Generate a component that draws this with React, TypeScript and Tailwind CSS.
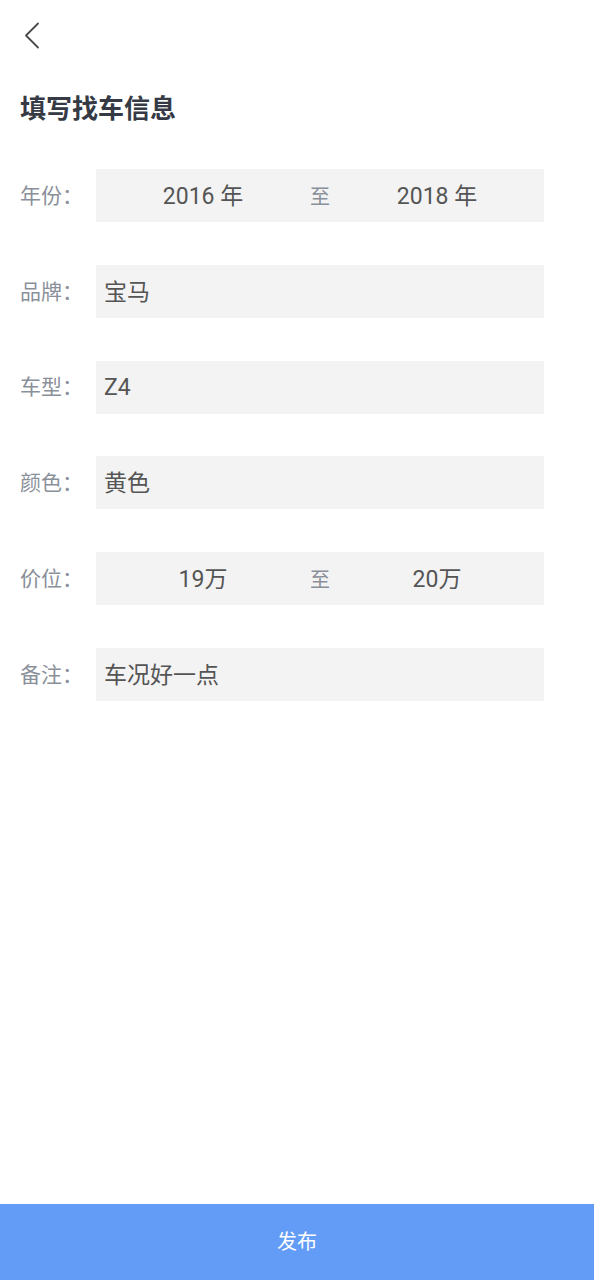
import React from "react";

const font = { fontFamily: 'Roboto, "Noto Sans CJK SC", "Noto Sans", sans-serif' };

function Row({ label, children }: { label: string; children: React.ReactNode }) {
  return (
    <div className="flex items-center h-[53px] pr-[50px]">
      <div className="w-[96px] pl-[20px] pt-[2px] text-[21px] text-[#8a9099]">{label}：</div>
      <div className="flex-1 h-full bg-[#f3f3f3] flex items-center pt-[3px] text-[23px] text-[#555555]">{children}</div>
    </div>
  );
}

function Range({ a, b }: { a: string; b: string }) {
  return (
    <>
      <div className="flex-1 text-center">{a}</div>
      <div className="w-[20px] flex justify-center text-[20px] text-[#8a9099]">至</div>
      <div className="flex-1 text-center">{b}</div>
    </>
  );
}

export default function App() {
  return (
    <div className="relative w-[594px] h-[1280px] bg-white" style={font}>
      <div className="h-[70px] pl-[24px] pt-[22px]">
        <svg width="16" height="28" viewBox="0 0 16 28" fill="none">
          <path d="M14 1.5 L2 13.5 L14 25.5" stroke="#4a4a4a" strokeWidth="1.8" strokeLinecap="round" strokeLinejoin="round" />
        </svg>
      </div>
      <div className="pl-[20px] h-[76px] pt-[21px] text-[26px] font-bold text-[#353a45] leading-[36px]">填写找车信息</div>
      <div className="flex flex-col gap-[42.8px] pt-[23px]">
        <Row label="年份"><Range a="2016 年" b="2018 年" /></Row>
        <Row label="品牌"><span className="pl-[8px]">宝马</span></Row>
        <Row label="车型"><span className="pl-[8px]">Z4</span></Row>
        <Row label="颜色"><span className="pl-[8px]">黄色</span></Row>
        <Row label="价位"><Range a="19万" b="20万" /></Row>
        <Row label="备注"><span className="pl-[8px]">车况好一点</span></Row>
      </div>
      <div className="absolute left-0 right-0 bottom-0 h-[76px] bg-[#639cf6] flex items-center justify-center text-white text-[20px]">发布</div>
    </div>
  );
}
